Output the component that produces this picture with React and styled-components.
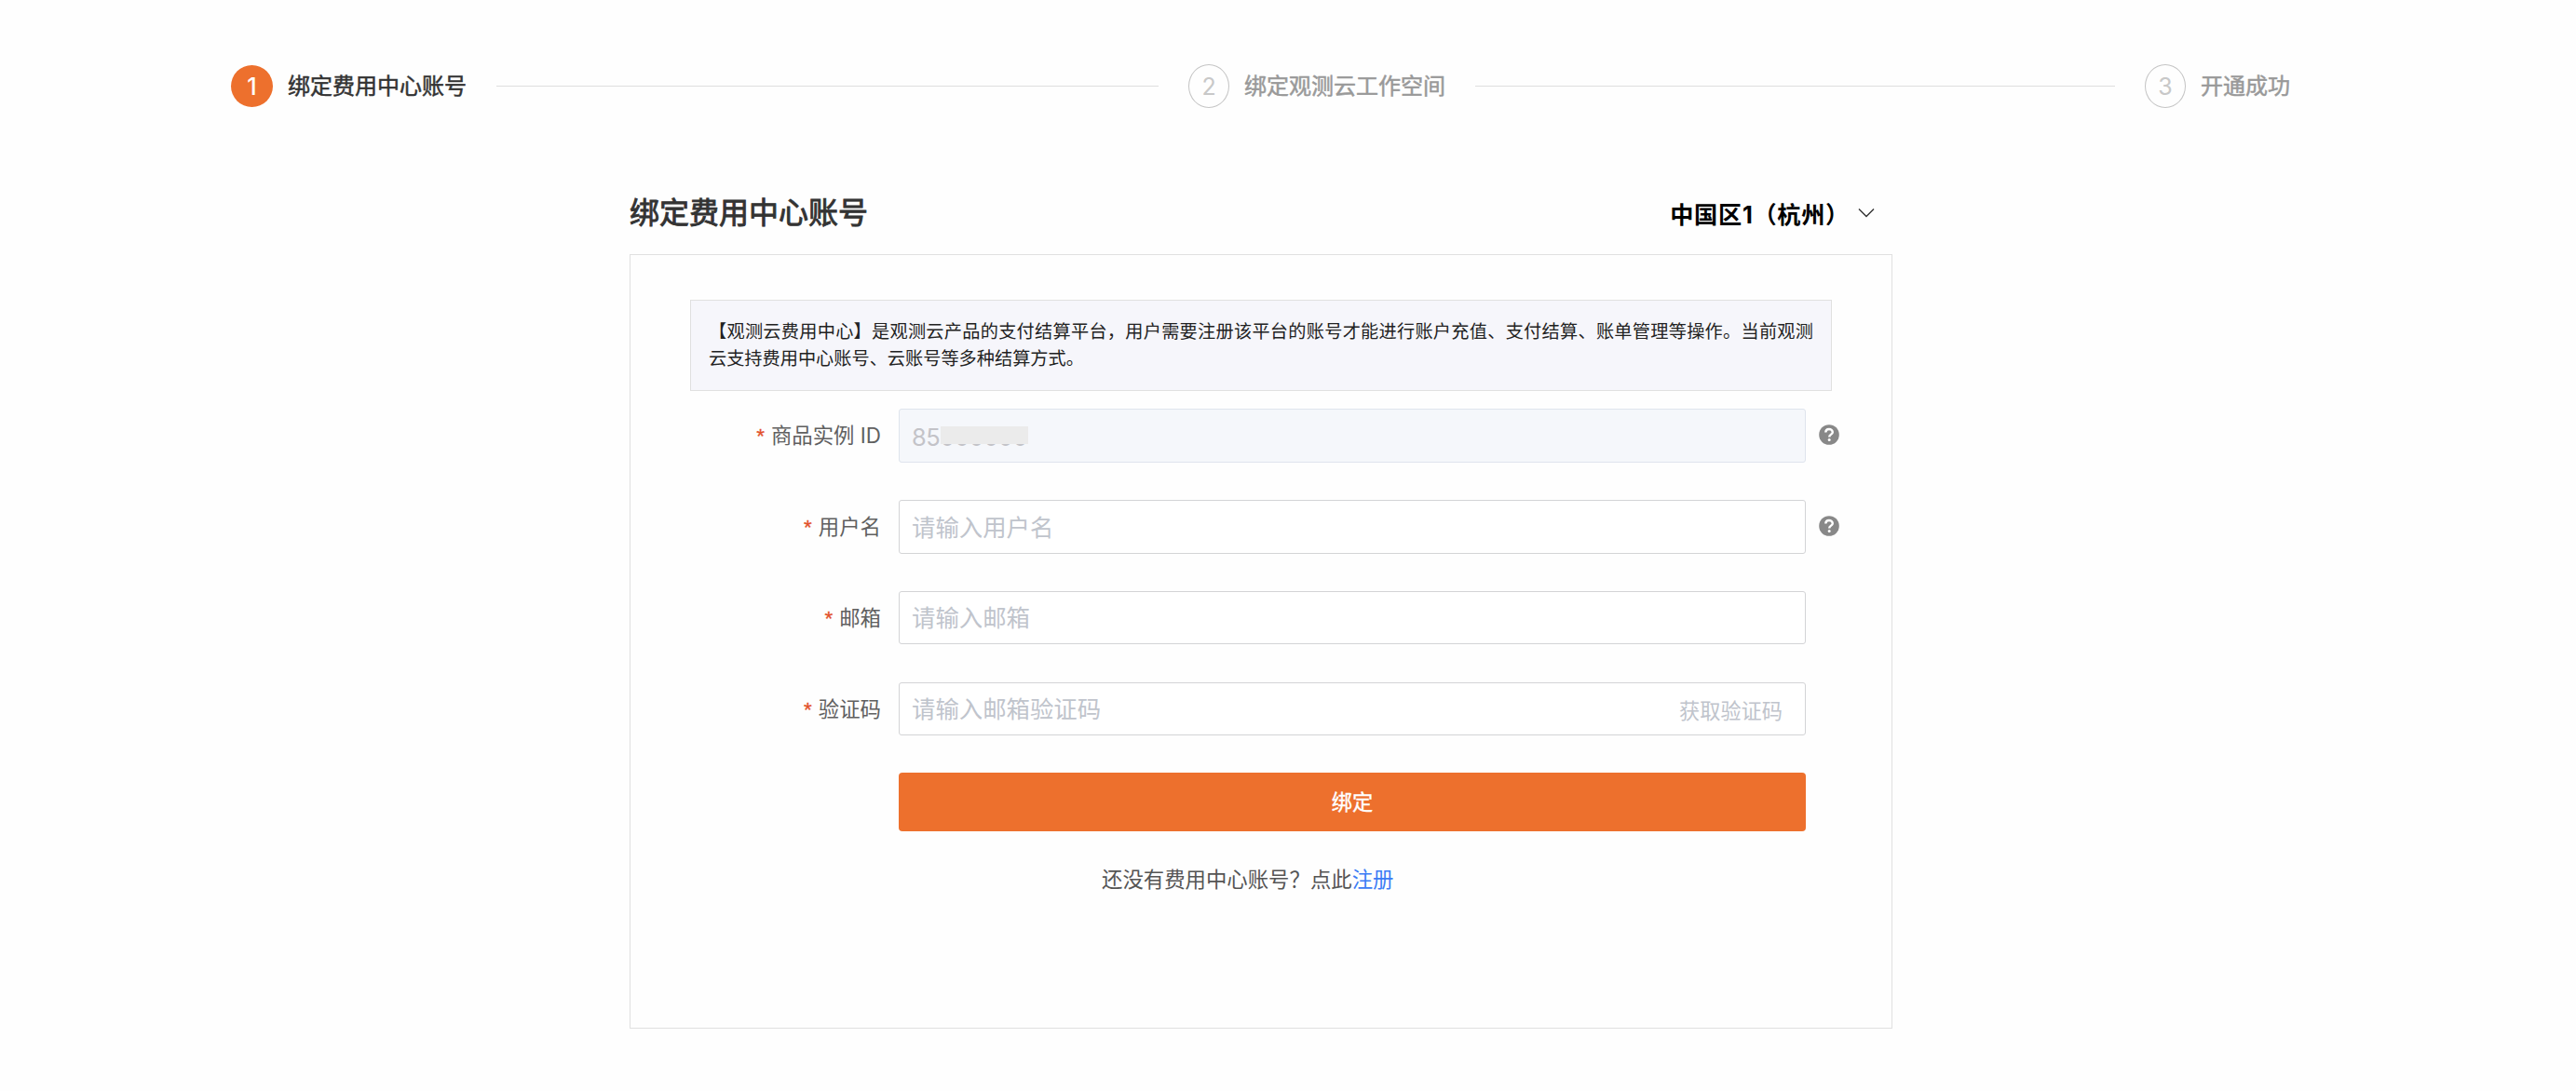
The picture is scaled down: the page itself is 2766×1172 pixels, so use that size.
import React from 'react';
import styled, { createGlobalStyle } from 'styled-components';

const GlobalStyle = createGlobalStyle`
    * {
        box-sizing: border-box;
    }
    body {
        margin: 0;
        background: #fefefe;
        font-family: Inter, "Noto Sans CJK SC", sans-serif;
        color: #333;
    }
`;

const Page = styled.div`
    height: 1172px;
    padding-top: 69px;
    overflow: hidden;
`;

const Steps = styled.div`
    display: flex;
    align-items: center;
    height: 47px;
    padding: 0 306px 0 248px;
`;

const StepCircle = styled.div`
    width: ${props => props.$active ? '45px' : '44px'};
    height: ${props => props.$active ? '45px' : '47px'};
    border: ${props => props.$active ? 'none' : '1px solid #c4c4c4'};
    border-radius: 50%;
    background: ${props => props.$active ? '#ed702d' : 'transparent'};
    color: ${props => props.$active ? '#fff' : '#c8c8c8'};
    font-size: 25px;
    font-weight: ${props => props.$active ? 500 : 400};
    display: flex;
    align-items: center;
    justify-content: center;
    flex-shrink: 0;
`;

const StepTitle = styled.div`
    margin-left: 16px;
    font-size: 24px;
    font-weight: 400;
    line-height: 36px;
    white-space: nowrap;
    color: ${props => props.$active ? '#333' : '#999'};
    -webkit-text-stroke: 0.5px;
`;

const StepLine = styled.div`
    height: 1px;
    width: ${props => props.$width}px;
    margin: 0 32px;
    background: #dedede;
    flex-shrink: 0;
`;

const Content = styled.div`
    width: 1356px;
    margin: 84px 0 0 676px;
`;

const Header = styled.div`
    display: flex;
    align-items: center;
    justify-content: space-between;
    height: 58px;
    margin-bottom: 15px;
    padding-right: 19px;
`;

const Title = styled.h1`
    margin: 0;
    font-size: 32px;
    font-weight: 400;
    line-height: 48px;
    -webkit-text-stroke: 0.9px;
`;

const Region = styled.div`
    display: flex;
    align-items: center;
    padding-top: 3px;
    font-size: 25.2px;
    font-weight: 700;
    line-height: 36px;
    letter-spacing: 0.7px;
    color: #000;

    svg {
        margin-left: 9px;
        margin-bottom: 4px;
    }
`;

const Card = styled.div`
    height: 832px;
    padding: 48px 64px 0;
    border: 1px solid #e0e0e0;
`;

const Notice = styled.div`
    width: 1226px;
    height: 98px;
    padding: 19px 19px 0 19px;
    border: 1px solid #e0e0e0;
    background: #f6f6fb;
    font-size: 19.2px;
    line-height: 29px;
    color: #222;
    text-align: justify;
`;

const Form = styled.div`
    padding-top: 19px;
`;

const Row = styled.div`
    display: flex;
    align-items: center;
    height: ${props => props.$height || 58}px;
    margin-bottom: ${props => 98 - (props.$height || 58)}px;
`;

const Label = styled.label`
    width: 205px;
    margin-right: 19px;
    padding-top: 1px;
    flex-shrink: 0;
    text-align: right;
    font-size: 22.4px;
    line-height: 34px;
    color: #606060;

    &::before {
        content: '*';
        margin-right: 7px;
        font-family: "Liberation Sans", sans-serif;
        color: #e2502a;
        -webkit-text-stroke: 0.3px;
    }
`;

const Field = styled.div`
    display: flex;
    align-items: center;
    justify-content: space-between;
    width: 974px;
    height: 100%;
    flex-shrink: 0;
    padding: 1px 24px 0 13px;
    border: 1px solid ${props => props.$disabled ? '#dfe4ed' : '#d3d4d6'};
    border-radius: 3px;
    background: ${props => props.$disabled ? '#f5f7fb' : '#fff'};
    font-size: 25.4px;
    line-height: 38px;
    color: #c0c4cc;
`;

const Digits = styled.span`
    position: relative;
    padding-top: 3px;
    letter-spacing: -0.4px;
    color: #c3c3c8;
`;

// hides the rest of the instance id
const Mask = styled.span`
    position: absolute;
    left: 31px;
    top: 10px;
    width: 94px;
    height: 19px;
    background: #ebebeb;
`;

const SendCode = styled.span`
    padding-top: 3px;
    font-size: 22.2px;
`;

const HelpIcon = styled.svg`
    margin-left: 14px;
    margin-bottom: 2px;
    flex-shrink: 0;
`;

const Submit = styled.button`
    display: block;
    width: 974px;
    height: 63px;
    margin: -1px 0 0 224px;
    padding: 0;
    border: none;
    border-radius: 4px;
    background: #ed702d;
    color: #fff;
    font-family: inherit;
    font-size: 22.2px;
    font-weight: 400;
    line-height: 63px;
    -webkit-text-stroke: 0.4px;
`;

const Footer = styled.div`
    margin: 35px 0 0 442px;
    font-size: 22.4px;
    line-height: 34px;
    color: #555;

    a {
        color: #3b7cf5;
        text-decoration: none;
    }
`;

const Help = () => (
    <HelpIcon width="22" height="22" viewBox="0 0 22 22">
        <circle cx="11" cy="11" r="10.8" fill="#888" />
        <path d="M7.3 8.6C7.3 6.2 9 5 11 5s3.8 1.2 3.8 3.2c0 2.4-3.6 2.5-3.6 5.3" fill="none" stroke="#fff" strokeWidth="2.4" />
        <circle cx="11.2" cy="16.6" r="1.5" fill="#fff" />
    </HelpIcon>
);

const App = () => {
    return (
        <Page>
            <GlobalStyle />
            <Steps>
                <StepCircle $active>1</StepCircle>
                <StepTitle $active>绑定费用中心账号</StepTitle>
                <StepLine $width={711} />
                <StepCircle>2</StepCircle>
                <StepTitle>绑定观测云工作空间</StepTitle>
                <StepLine $width={687} />
                <StepCircle>3</StepCircle>
                <StepTitle>开通成功</StepTitle>
            </Steps>
            <Content>
                <Header>
                    <Title>绑定费用中心账号</Title>
                    <Region>
                        中国区1（杭州）
                        <svg width="18" height="12" viewBox="0 0 18 12">
                            <path d="M1 1.5l8 8 8-8" fill="none" stroke="#333" strokeWidth="1.4" />
                        </svg>
                    </Region>
                </Header>
                <Card>
                    <Notice>
                        【观测云费用中心】是观测云产品的支付结算平台，用户需要注册该平台的账号才能进行账户充值、支付结算、账单管理等操作。当前观测云支持费用中心账号、云账号等多种结算方式。
                    </Notice>
                    <Form>
                        <Row>
                            <Label>商品实例 ID</Label>
                            <Field $disabled>
                                <Digits>85000000<Mask /></Digits>
                            </Field>
                            <Help />
                        </Row>
                        <Row>
                            <Label>用户名</Label>
                            <Field>请输入用户名</Field>
                            <Help />
                        </Row>
                        <Row $height={57}>
                            <Label>邮箱</Label>
                            <Field>请输入邮箱</Field>
                        </Row>
                        <Row $height={57}>
                            <Label>验证码</Label>
                            <Field>
                                请输入邮箱验证码
                                <SendCode>获取验证码</SendCode>
                            </Field>
                        </Row>
                        <Submit>绑定</Submit>
                        <Footer>
                            还没有费用中心账号？点此<a href="#">注册</a>
                        </Footer>
                    </Form>
                </Card>
            </Content>
        </Page>
    );
};

export default App;
